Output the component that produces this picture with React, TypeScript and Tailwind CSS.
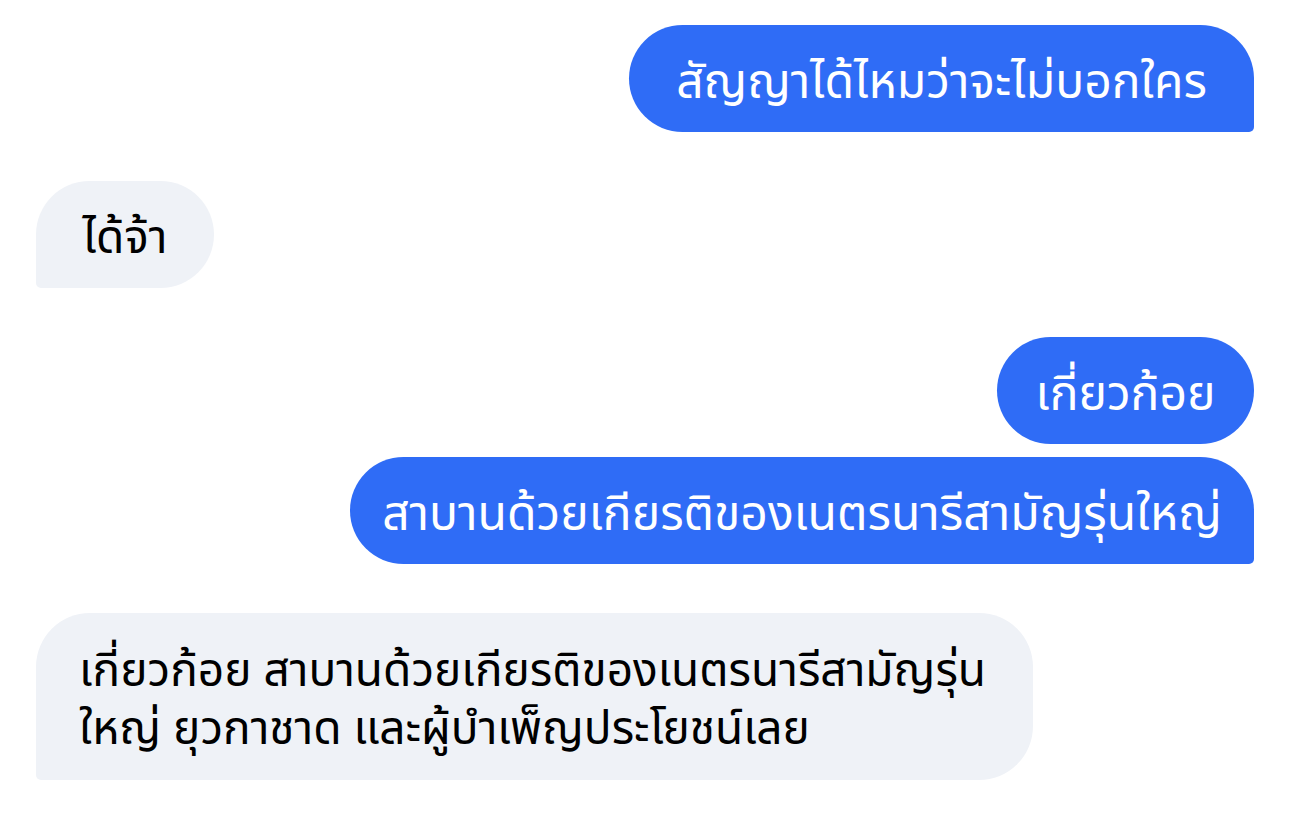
const sent = "bg-[#2f6cf6] text-white text-[48px]";
const recv = "bg-[#eff2f7] text-black text-[46px]";

export default function App() {
  return (
    <div
      className="w-[1290px] h-[815px] bg-white px-[36px] pt-[25px] flex flex-col"
      style={{ fontFamily: '"Noto Sans Thai", "Noto Sans", "DejaVu Sans", sans-serif' }}
    >
      <div className="flex justify-end">
        <div className={`${sent} w-[625px] h-[107px] pt-[10px] flex items-center justify-center rounded-[54px] rounded-br-[5px] whitespace-nowrap`}>
          สัญญาได้ไหมว่าจะไม่บอกใคร
        </div>
      </div>

      <div className="flex justify-start mt-[49px]">
        <div className={`${recv} w-[178px] h-[107px] pt-[10px] flex items-center justify-center rounded-[54px] rounded-bl-[5px] whitespace-nowrap`}>
          ได้จ้า
        </div>
      </div>

      <div className="flex flex-col items-end mt-[49px] gap-[13px]">
        <div className={`${sent} w-[257px] h-[107px] pt-[10px] flex items-center justify-center rounded-[54px] whitespace-nowrap`}>
          เกี่ยวก้อย
        </div>
        <div className={`${sent} w-[904px] h-[107px] pt-[10px] flex items-center justify-center rounded-[54px] rounded-br-[5px] whitespace-nowrap text-[47px]`}>
          สาบานด้วยเกียรติของเนตรนารีสามัญรุ่นใหญ่
        </div>
      </div>

      <div className="flex justify-start mt-[49px]">
        <div className={`${recv} w-[997px] h-[167px] pt-[8px] flex flex-col justify-center px-[43px] leading-[58px] rounded-[54px] rounded-bl-[5px] whitespace-nowrap`}>
          <span>เกี่ยวก้อย สาบานด้วยเกียรติของเนตรนารีสามัญรุ่น</span>
          <span>ใหญ่ ยุวกาชาด และผู้บำเพ็ญประโยชน์เลย</span>
        </div>
      </div>
    </div>
  );
}
